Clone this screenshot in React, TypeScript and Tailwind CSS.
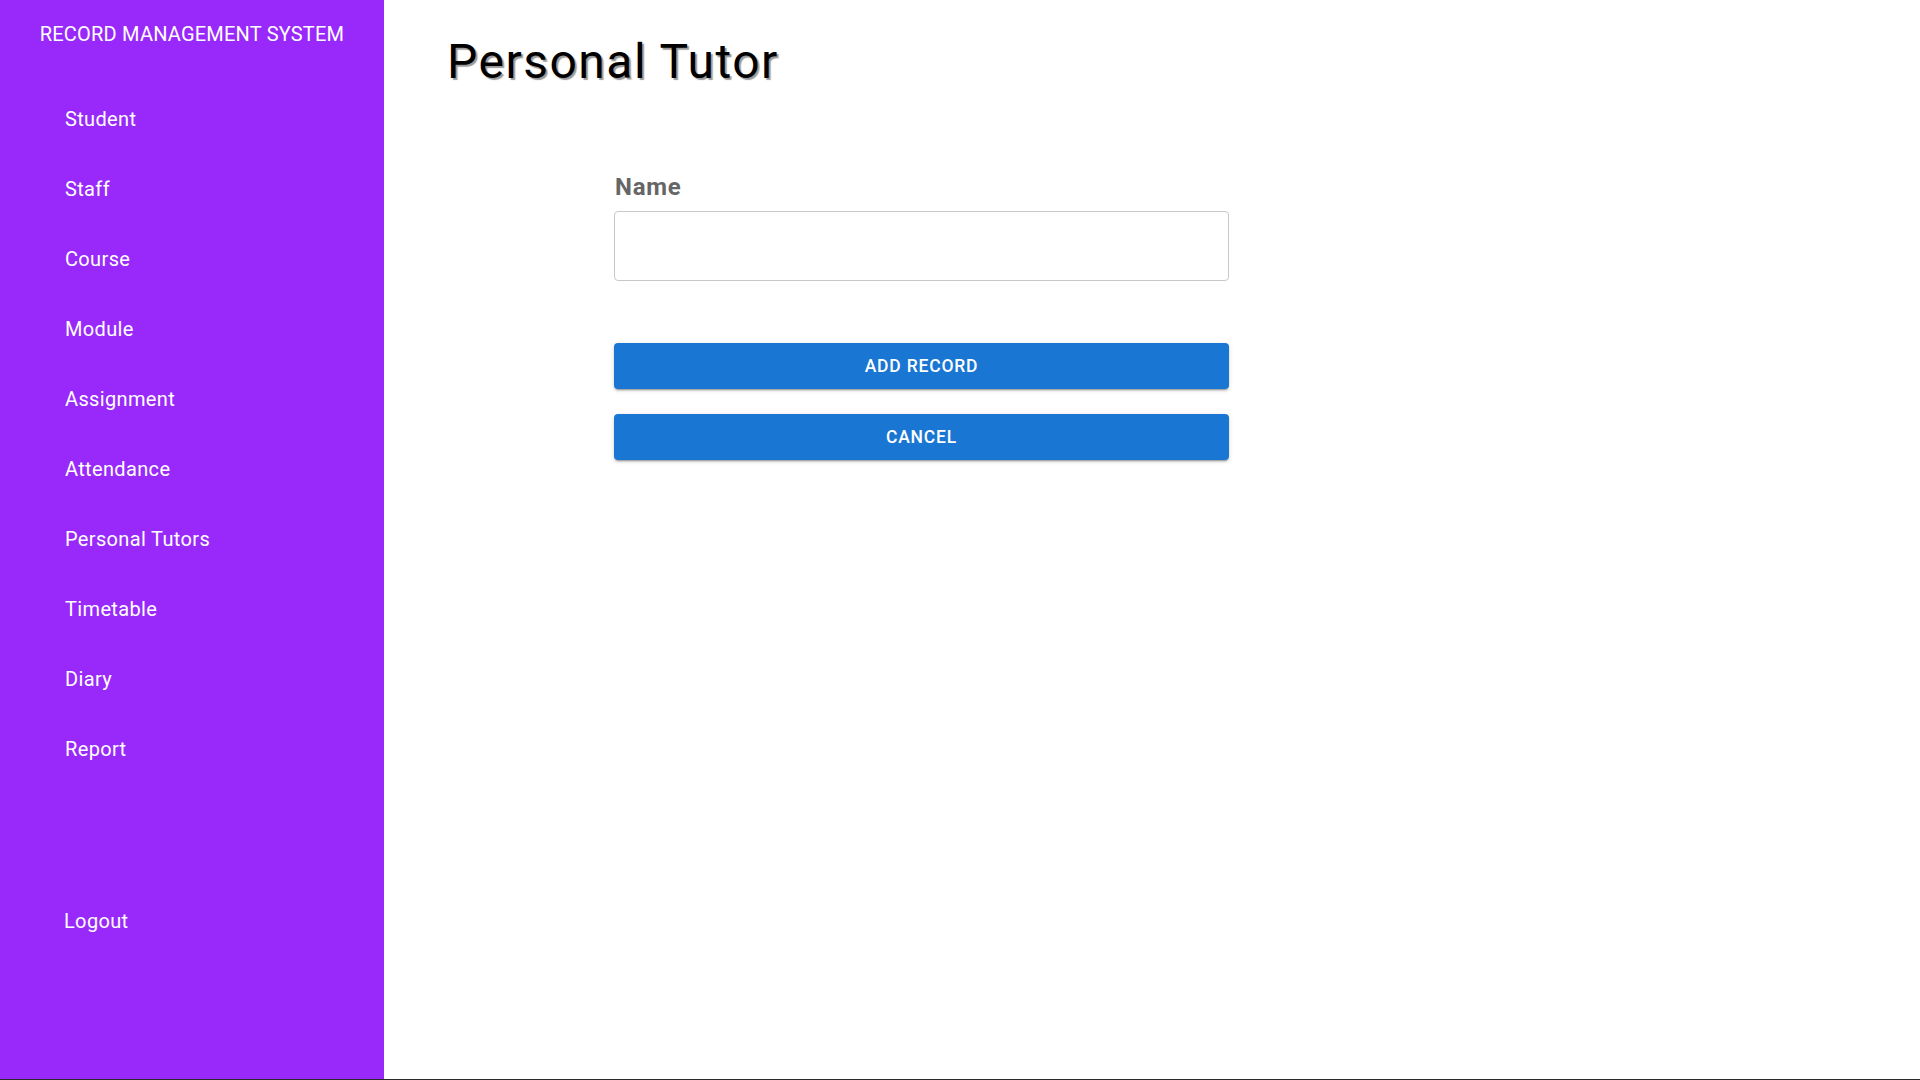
import React from "react";

const items = [
  "Student",
  "Staff",
  "Course",
  "Module",
  "Assignment",
  "Attendance",
  "Personal Tutors",
  "Timetable",
  "Diary",
  "Report",
];

const btn =
  "h-[46px] w-full rounded-[4px] bg-[#1976d2] text-white text-[17.5px] font-medium tracking-[0.8px] shadow-[0_3px_1px_-2px_rgba(0,0,0,0.2),0_2px_2px_0_rgba(0,0,0,0.14),0_1px_5px_0_rgba(0,0,0,0.12)]";

export default function App() {
  return (
    <div className="w-[1920px] h-[1080px] flex flex-col bg-[#2a2a2a] overflow-hidden font-['Roboto',sans-serif]">
      <div className="flex h-[1079px] bg-white">
        <aside className="w-[384px] shrink-0 bg-[#9929fb] text-white flex flex-col">
          <div className="mt-[22px] text-center text-[20px] leading-[24px] tracking-[0.2px]">
            RECORD MANAGEMENT SYSTEM
          </div>
          <nav className="mt-[38px] flex flex-col">
            {items.map((it) => (
              <div key={it} className="h-[70px] flex items-center pl-[65px] text-[20px] leading-[24px] tracking-[0.35px]">
                {it}
              </div>
            ))}
          </nav>
          <div className="mt-[102px] h-[70px] flex items-center pl-[64px] text-[20px] leading-[24px] tracking-[0.35px]">
            Logout
          </div>
        </aside>
        <main className="flex-1 flex flex-col">
          <h1 className="mt-[38px] ml-[63px] text-[48px] leading-[48px] tracking-[1.5px] text-black [text-shadow:2px_2px_1px_rgba(0,0,0,0.4)]">
            Personal Tutor
          </h1>
          <div className="mt-[87px] ml-[230px] w-[615px] flex flex-col">
            <label className="text-[24px] leading-[28px] font-bold text-[#666] pl-[1px] tracking-[0.75px]">Name</label>
            <input
              className="mt-[10px] h-[70px] w-full border border-[#c8c8c8] rounded-[4px] outline-none px-3"
              type="text"
            />
            <button className={"mt-[62px] " + btn}>ADD RECORD</button>
            <button className={"mt-[25px] " + btn}>CANCEL</button>
          </div>
        </main>
      </div>
      <div className="h-[1px] bg-[#2a2a2a]" />
    </div>
  );
}
